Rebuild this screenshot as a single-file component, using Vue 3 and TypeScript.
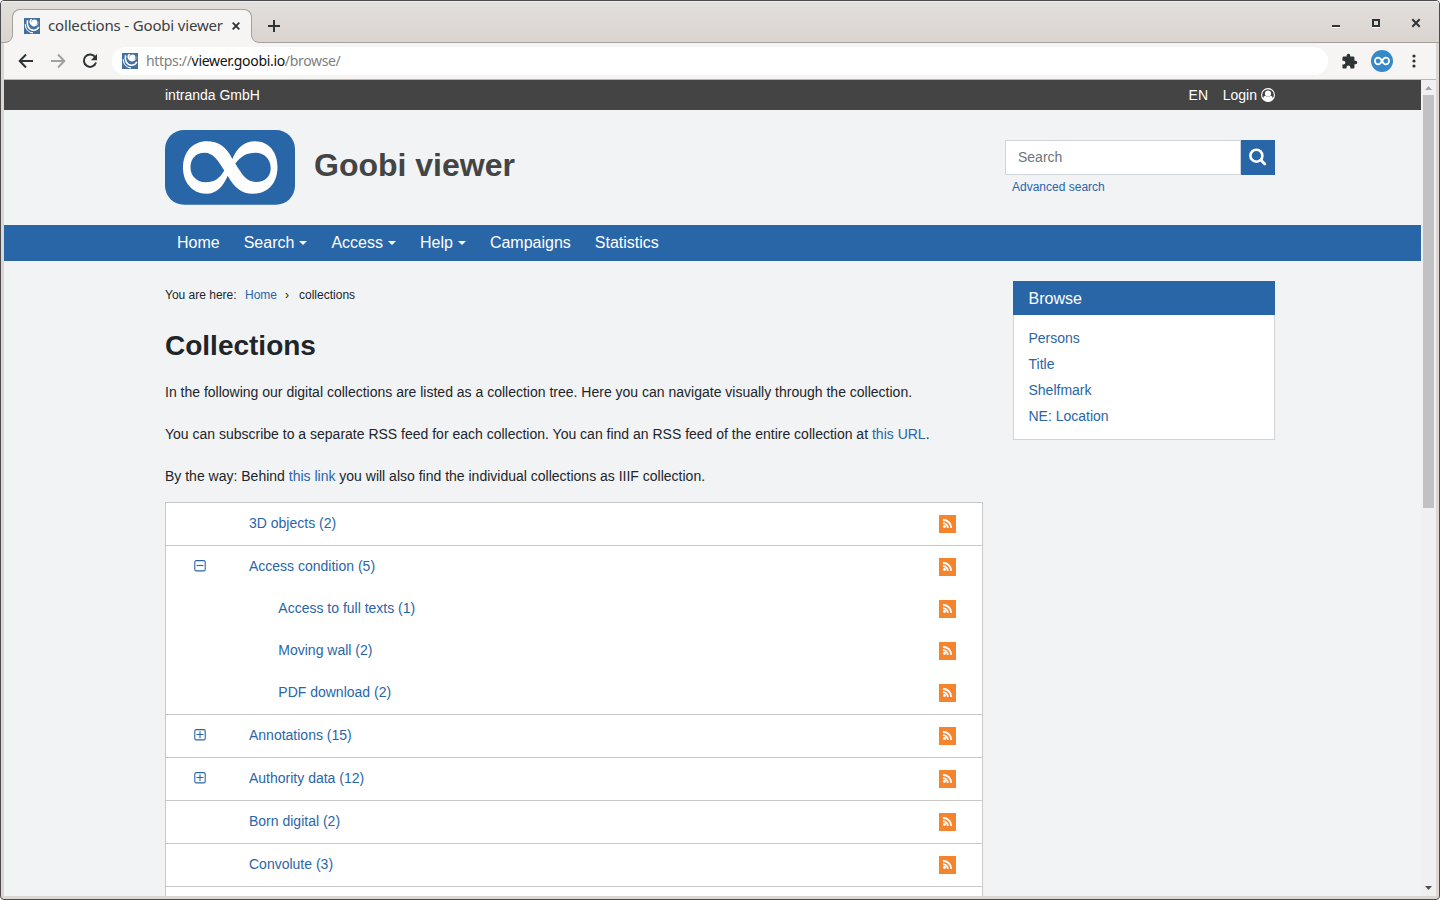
<script setup lang="ts">
interface NavItem { label: string; menu: boolean }
interface Collection { name: string; toggle?: 'minus' | 'plus'; children?: string[] }

const nav: NavItem[] = [
  { label: 'Home', menu: false },
  { label: 'Search', menu: true },
  { label: 'Access', menu: true },
  { label: 'Help', menu: true },
  { label: 'Campaigns', menu: false },
  { label: 'Statistics', menu: false },
]
const browse: string[] = ['Persons', 'Title', 'Shelfmark', 'NE: Location']
const collections: Collection[] = [
  { name: '3D objects (2)' },
  { name: 'Access condition (5)', toggle: 'minus', children: ['Access to full texts (1)', 'Moving wall (2)', 'PDF download (2)'] },
  { name: 'Annotations (15)', toggle: 'plus' },
  { name: 'Authority data (12)', toggle: 'plus' },
  { name: 'Born digital (2)' },
  { name: 'Convolute (3)' },
]
</script>

<template>
  <!-- Shared symbols -->
  <svg class="defs" width="0" height="0">
    <symbol id="favicon" viewBox="0 0 16 16">
      <rect width="16" height="16" fill="#42709f" />
      <path d="M6.300 1.200a4.600 4.600 0 1 0 8.200 1.500c.2 2.800-1.300 4.300-3.400 4.300S7.500 5.500 7.500 3.800c0-1 .2-1.900.7-2.800z" fill="#fff" />
      <circle cx="10.500" cy="4.300" r="2.900" fill="#fff" />
      <path d="M3.600 2.300C2.300 7.500 5 12.200 9.300 12.200c2.600 0 4.600-1.200 5.500-3.400" fill="none" stroke="#fff" stroke-width="1.600" />
      <path d="M1.200 6.200C1.500 11 4.500 14.600 9 14.800" fill="none" stroke="#fff" stroke-width="1.200" />
    </symbol>
    <symbol id="rss" viewBox="0 0 17 18">
      <rect width="17" height="18" fill="#f4842d" />
      <circle cx="5.500" cy="11.500" r="1.400" fill="#fff" />
      <path d="M4 8.200a4.700 4.700 0 0 1 4.800 4.800M4 5a8 8 0 0 1 8.300 8" fill="none" stroke="#fff" stroke-width="1.800" />
    </symbol>
  </svg>

  <div class="window">
    <header class="tabstrip">
      <div class="tab">
        <svg class="foot foot-left" width="9" height="9" viewBox="0 0 9 9"><path d="M0 9V8.500C5.500 8.500 8.500 5.500 8.500 0H9v9z" fill="#f6f5f4" /><path d="M0 8.500C5.500 8.500 8.500 5.500 8.500 0" fill="none" stroke="#a6a19d" /></svg>
        <svg class="foot foot-right" width="9" height="9" viewBox="0 0 9 9"><path d="M9 9V8.500C3.500 8.500.5 5.500.5 0H0v9z" fill="#f6f5f4" /><path d="M9 8.500C3.500 8.500.5 5.500.5 0" fill="none" stroke="#a6a19d" /></svg>
        <svg class="fav"><use href="#favicon" /></svg>
        <span class="tab-title">collections - Goobi viewer</span>
        <svg class="tab-close" width="8" height="8" viewBox="0 0 8 8"><path d="M.7.7l6.600 6.600M7.300.7L.7 7.300" stroke="#2e3436" stroke-width="1.900" /></svg>
      </div>
      <svg class="new-tab" width="12" height="12" viewBox="0 0 12 12"><path d="M6 0v12M0 6h12" stroke="#2e3436" stroke-width="2" /></svg>
      <div class="controls">
        <svg width="10" height="10" viewBox="0 0 10 10"><path d="M1 8h8" stroke="#2e3436" stroke-width="2" /><path d="M1 9.500h8" stroke="#fff" /></svg>
        <svg width="10" height="10" viewBox="0 0 10 10"><path d="M2 2h6v6H2z" fill="none" stroke="#2e3436" stroke-width="2" /><path d="M1 9.500h8" stroke="#fff" /></svg>
        <svg width="10" height="10" viewBox="0 0 10 10"><path d="M1.300 1.300l7.400 7.400M8.700 1.300L1.300 8.700" stroke="#2e3436" stroke-width="2" /></svg>
      </div>
    </header>

    <div class="toolbar">
      <svg class="tool" width="16" height="16" viewBox="0 0 16 16"><path d="M15 8H2M8 1.500L1.700 8 8 14.500" fill="none" stroke="#2e3436" stroke-width="2" /></svg>
      <svg class="tool" width="16" height="16" viewBox="0 0 16 16"><path d="M1 8h13M8 1.500L14.300 8 8 14.500" fill="none" stroke="#a0a2a2" stroke-width="2" /></svg>
      <svg class="tool" width="16" height="16" viewBox="0 0 16 16"><path d="M13.300 4.300A6.200 6.200 0 1 0 14 9.500" fill="none" stroke="#2e3436" stroke-width="2" /><path d="M15 1v6.200H8.800z" fill="#2e3436" /></svg>
      <div class="address">
        <svg class="fav"><use href="#favicon" /></svg>
        <span class="url">https://<b>viewer.goobi.io</b>/browse/</span>
      </div>
      <svg class="puzzle" width="17" height="17" viewBox="0 0 24 24"><path fill="#2e3436" d="M20.500 11H19V7c0-1.100-.9-2-2-2h-4V3.500a2.500 2.500 0 0 0-5 0V5H4c-1.100 0-2 .9-2 2v3.800h1.500a2.700 2.700 0 0 1 0 5.400H2V20c0 1.100.9 2 2 2h3.800v-1.500a2.700 2.700 0 0 1 5.400 0V22H17c1.100 0 2-.9 2-2v-4h1.500a2.500 2.500 0 0 0 0-5z" /></svg>
      <svg class="avatar" width="22" height="22" viewBox="0 0 22 22"><circle cx="11" cy="11" r="11" fill="#3689c9" /><path d="M11 11C9.600 8.400 8.600 7.700 7.200 7.700a3.300 3.300 0 0 0 0 6.600c1.400 0 2.400-.7 3.800-3.300s2.400-3.300 3.800-3.300a3.300 3.300 0 0 1 0 6.600c-1.400 0-2.400-.7-3.800-3.300z" fill="none" stroke="#fff" stroke-width="1.800" /></svg>
      <svg class="dots" width="4" height="14" viewBox="0 0 4 14"><circle cx="2" cy="2" r="1.600" /><circle cx="2" cy="7" r="1.600" /><circle cx="2" cy="12" r="1.600" /></svg>
    </div>

    <div class="viewport">
      <div class="page">
        <div class="topbar">
          <div class="container top-inner">
            <span>intranda GmbH</span>
            <span class="lang">EN</span>
            <span>Login</span>
            <svg class="user" width="14" height="14" viewBox="0 0 14 14"><circle cx="7" cy="7" r="6.400" fill="none" stroke="#fff" stroke-width="1.100" /><circle cx="7" cy="5.600" r="3.100" fill="#fff" /><path d="M2 11c.2-2.100 1.100-3 2.400-3.200a3.700 3.700 0 0 0 5.200 0c1.300.2 2.200 1.100 2.400 3.200a6.300 6.300 0 0 1-10 0z" fill="#fff" /></svg>
          </div>
        </div>

        <div class="container masthead">
          <svg class="logo" width="130" height="75" viewBox="0 0 130 75">
            <rect width="130" height="74.700" rx="19" fill="#2966a8" />
            <path fill="#fff" fill-rule="evenodd" d="M42 11.300c11 0 19 5 25.400 17.700C72 18 79 11.300 90 11.300c14 0 22.500 11 22.500 25.700 0 16-9.500 26.700-24.500 26.700-11.500 0-18.500-5.700-25.300-18C58 57 51 63.700 41.500 63.700 27 63.700 18 52 18 38c0-16 9.500-26.700 24-26.700zM39.500 22.700C30 22.700 25.500 29.500 25.500 37.500c0 8.500 6.500 14.800 15 14.800 9 0 14-3.800 18.800-11.800C53 30.500 48.500 22.700 39.500 22.700zM70.300 33.500C76.500 43.500 81 52 91 52c9.500 0 14.700-6 14.700-14 0-8.500-6-15.300-15.200-15.300-9 0-15.200 4-20.200 10.800z" />
          </svg>
          <span class="brand">Goobi viewer</span>
          <div class="search">
            <div class="search-row">
              <div class="search-input">Search</div>
              <div class="search-btn"><svg width="18" height="18" viewBox="0 0 18 18"><circle cx="7.400" cy="7.700" r="6" fill="none" stroke="#fff" stroke-width="2.600" /><path d="M11.800 12l4 4" stroke="#fff" stroke-width="2.800" stroke-linecap="round" /></svg></div>
            </div>
            <a class="advanced">Advanced search</a>
          </div>
        </div>

        <nav class="navbar">
          <div class="container nav-inner">
            <a v-for="item in nav" :key="item.label">{{ item.label }}<i v-if="item.menu" class="caret"></i></a>
          </div>
        </nav>

        <div class="container columns">
          <main>
            <div class="crumbs"><span>You are here:</span><a>Home</a><span class="sep">›</span><span>collections</span></div>
            <h1>Collections</h1>
            <p>In the following our digital collections are listed as a collection tree. Here you can navigate visually through the collection.</p>
            <p>You can subscribe to a separate RSS feed for each collection. You can find an RSS feed of the entire collection at <a>this URL</a>.</p>
            <p>By the way: Behind <a>this link</a> you will also find the individual collections as IIIF collection.</p>
            <div class="tree">
              <section v-for="c in collections" :key="c.name">
                <div class="row">
                  <span class="toggle">
                    <svg v-if="c.toggle" width="12" height="12" viewBox="0 0 12 12"><rect x=".8" y=".6" width="10.400" height="10.300" rx="1.500" fill="none" stroke="#2966a8" stroke-width="1.100" /><path :d="c.toggle === 'plus' ? 'M2.500 5.500h7M6 2.200v7' : 'M2.500 5.500h7'" stroke="#2966a8" stroke-width="1.100" /></svg>
                  </span>
                  <a>{{ c.name }}</a>
                  <svg class="rss"><use href="#rss" /></svg>
                </div>
                <div v-for="s in c.children" :key="s" class="row sub">
                  <a>{{ s }}</a>
                  <svg class="rss"><use href="#rss" /></svg>
                </div>
              </section>
              <section><div class="row"></div></section>
            </div>
          </main>
          <aside>
            <h2>Browse</h2>
            <ul><li v-for="b in browse" :key="b"><a>{{ b }}</a></li></ul>
          </aside>
        </div>
      </div>
      <div class="scrollbar">
        <svg class="arrow" width="7" height="4" viewBox="0 0 7 4"><path d="M0 4L3.500 0 7 4z" fill="#a3a3a3" /></svg>
        <div class="thumb"></div>
        <svg class="arrow" width="7" height="4" viewBox="0 0 7 4"><path d="M0 0h7L3.500 4z" fill="#505050" /></svg>
      </div>
    </div>
  </div>
</template>

<style>
html, body { margin: 0; background: #fff; overflow: hidden; }
</style>

<style scoped>
* { box-sizing: border-box; }
.defs { display: block; }
svg { display: block; flex: none; }
.window {
  width: 1440px; height: 900px; display: flex; flex-direction: column;
  border: 1px solid #4c4b4e; border-radius: 4px; padding: 0 3px 3px; overflow: hidden;
  background: #dcd7d3; font-family: "Liberation Sans", Arial, sans-serif; font-size: 14px; color: #212529;
}
.tabstrip {
  height: 42px; margin: 0 -3px; padding-left: 11px; flex: none; display: flex; align-items: flex-start;
  background: linear-gradient(#e3dfdc, #d9d4d0); box-shadow: inset 0 1px #f0eeec, inset 0 -1px #a6a19d;
}
.tab {
  position: relative; width: 240px; height: 34px; margin-top: 8px; padding: 0 11px 2px; display: flex; align-items: center;
  background: #f6f5f4; border: 1px solid #a6a19d; border-bottom: 0; border-radius: 8px 8px 0 0;
}
.foot { position: absolute; bottom: 0; }
.foot-left { left: -9px; }
.foot-right { right: -9px; }
.fav { width: 16px; height: 16px; }
.tab-title { width: 176px; margin: -1px 0 0 8px; font: 15px/22px "Noto Sans", sans-serif; letter-spacing: -.17px; color: #3a4042; white-space: nowrap; }
.tab-close { margin-left: 8px; }
.new-tab { margin: 19px 0 0 16px; }
.controls { margin: 17px 18px 0 auto; display: flex; gap: 30px; }
.toolbar { height: 37px; flex: none; display: flex; align-items: center; background: #f6f5f4; border-bottom: 1px solid #b9b6b3; padding: 0 20px 0 14px; }
.tool { margin-right: 16px; }
.address { width: 1216px; height: 28px; margin-left: -2px; padding-left: 10px; border-radius: 14px; background: #fff; display: flex; align-items: center; }
.url { margin-left: 8px; font: 14px/20px "Noto Sans", sans-serif; color: #7c7f80; white-space: nowrap; letter-spacing: -.33px; }
.url b { font-weight: 400; color: #111; }
.puzzle { margin-left: 13px; }
.avatar { margin-left: 13px; }
.dots { margin-left: 19px; fill: #2e3436; }
.viewport { flex: 1; min-height: 0; display: flex; overflow: hidden; background: #f1f3f5; }
.page { width: 1417px; height: 816px; overflow: hidden; }
.container { width: 1110px; margin-left: 161px; }
.topbar { height: 30px; background: #444; color: #fff; }
.top-inner { display: flex; align-items: center; height: 30px; }
.lang { margin-left: auto; margin-right: 14.700px; }
.user { margin-left: 4px; }
.masthead { height: 115px; display: flex; align-items: flex-start; padding-top: 20px; }
.brand { margin: 16px 0 0 19px; font-size: 32px; line-height: 38px; font-weight: 700; color: #444; }
.search { width: 270px; margin: 10px 0 0 auto; }
.search-row { display: flex; }
.search-input { width: 236px; height: 35px; padding-left: 12px; line-height: 33px; background: #fff; border: 1px solid #ced4da; color: #6c757d; }
.search-btn { width: 34px; height: 35px; padding: 8px; background: #2966a8; }
a { color: #2966a8; }
.advanced { display: block; margin: 4px 0 0 7px; font-size: 12px; line-height: 16px; }
.navbar { height: 36px; background: #2966a8; }
.nav-inner { height: 36px; padding-left: 12px; display: flex; gap: 24px; align-items: center; font-size: 16px; }
.nav-inner a { color: #fff; display: flex; align-items: center; line-height: 36px; }
.caret { margin: -1px 0 0 5px; border: 4px solid transparent; border-top-color: #fff; border-bottom: 0; }
.columns { display: flex; justify-content: space-between; align-items: flex-start; padding-top: 20px; }
main { width: 818px; }
.crumbs { display: flex; padding-top: 5px; font-size: 12px; line-height: 18px; }
.crumbs a { margin: 0 8px 0 8.400px; }
.sep { margin-right: 10px; }
h1 { margin: 25px 0 0; font-size: 28px; line-height: 34px; }
p { margin: 0 0 21px; line-height: 21px; white-space: nowrap; }
h1 + p { margin-top: 19px; }
.tree { margin-top: -6px; border: 1px solid #c8c8c8; background: #fff; }
section + section { border-top: 1px solid #c8c8c8; }
.row { height: 42px; display: flex; align-items: center; padding-right: 26px; }
.row a { line-height: 21px; margin-top: -1px; }
.toggle { width: 83px; padding-left: 28px; margin-top: -2px; flex: none; }
.sub { padding-left: 112.300px; }
.rss { width: 17px; height: 18px; margin-left: auto; }
aside { width: 262px; background: #fff; border: 1px solid #d3d4d5; border-top: 0; }
h2 { margin: 0 -1px; height: 34px; padding-left: 15.500px; background: #2966a8; color: #fff; font-size: 16px; font-weight: 400; line-height: 35px; }
ul { list-style: none; margin: 0; padding: 10px 14.500px; }
li { height: 26px; line-height: 26px; }
.scrollbar { width: 15px; background: #f0f0f0; display: flex; flex-direction: column; align-items: center; padding: 6px 0; }
.thumb { width: 11px; height: 413px; margin: 5px 0 auto; background: #c1c1c1; }
</style>
